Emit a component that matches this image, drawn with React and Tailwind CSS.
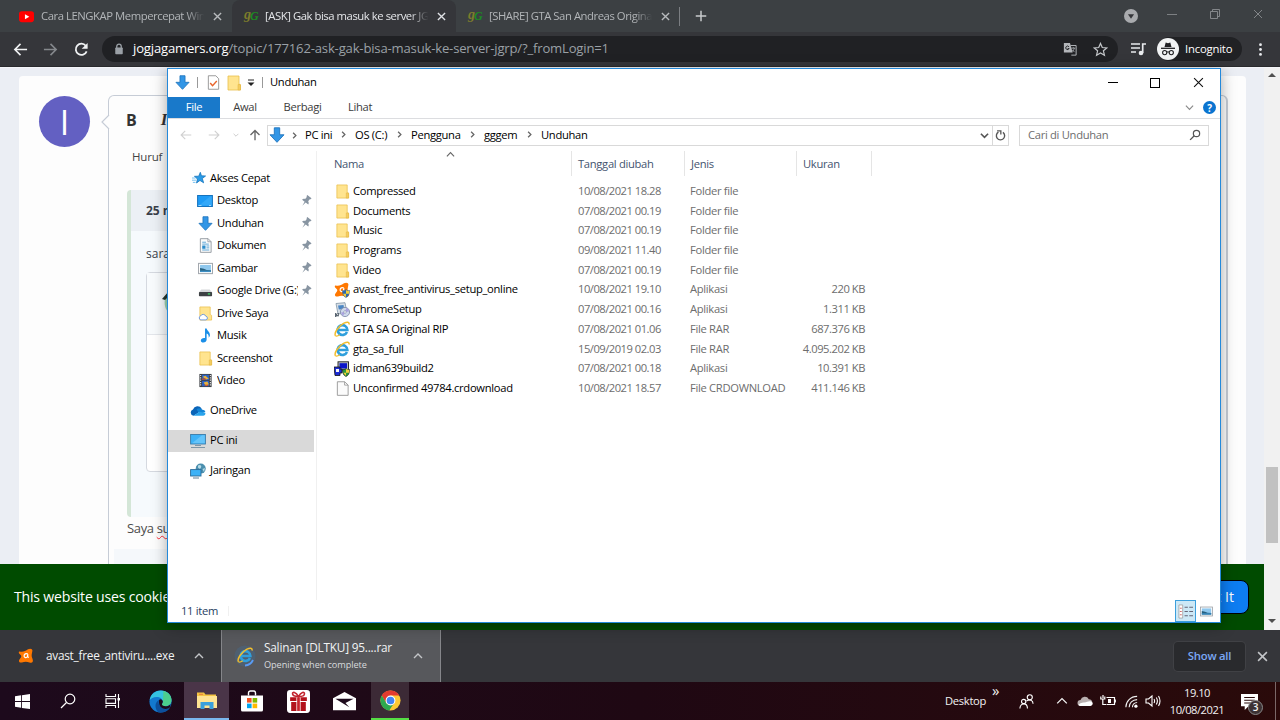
import React from 'react'

const Svg = ({ size = 16, box = 16, className = "", children }) => (
  <svg width={size} height={size} viewBox={`0 0 ${box} ${box}`} fill="none" className={`block shrink-0 ${className}`}>
    {children}
  </svg>
)

const Folder = ({ size = 15 }) => (
  <Svg size={size}>
    <path d="M2 1h11v8l1.500 1v5H2z" fill="#ffe48f" stroke="#e9bf4c" strokeWidth=".8" />
    <path d="M12 9.5h2.5V15H12z" fill="#f4cd60" stroke="#e0b13c" strokeWidth=".5" />
  </Svg>
)
const DownArrow = ({ size = 15 }) => (
  <Svg size={size}>
    <path d="M5.3.8h5.4v7H15L8 15.3 1 7.800h4.300z" fill="#3296e6" stroke="#1f74bd" strokeWidth=".9" />
  </Svg>
)
const QuickStar = () => (
  <Svg size={14}>
    <path d="M9.500 1.500l1.300 4 4.700.2-3.700 2.900 1.500 4.900-4.200-2.700-3.900 2.900 1-4.600L2.800 6.100l4.900-.2z" fill="#2b9be6" stroke="#1474bd" strokeWidth=".9" />
    <path d="M0 8h4M0 10.500h4.500M1 13h3" stroke="#63b8ee" strokeWidth="1" />
  </Svg>
)
const DesktopIcon = () => (
  <Svg size={16}>
    <rect x=".6" y="2.500" width="14.800" height="11" fill="#1e9bf5" stroke="#1673bd" />
    <path d="M2 12.500L13 3.500h1.800v9z" fill="#41b1fa" opacity=".6" />
    <path d="M1.500 12.500h3M12 12.500h2" stroke="#bfe3fb" strokeWidth=".8" />
  </Svg>
)
const DocIcon = () => (
  <Svg size={15}>
    <path d="M2.500.7h8.300L14 4v11.300H2.500z" fill="#fafafa" stroke="#8b9299" strokeWidth=".9" />
    <path d="M10.500.7V4H14" stroke="#8b9299" strokeWidth=".8" />
    <path d="M4.500 4.500h4M4.500 6.500h7M9 8.500h3M9 10.500h3M4.500 12.800h7.500" stroke="#5aa4d6" />
    <rect x="4.500" y="8" width="3.500" height="3.500" fill="#2b8bcb" />
  </Svg>
)
const PictureIcon = ({ size = 15 }) => (
  <Svg size={size}>
    <rect x=".6" y="2.500" width="14.800" height="11" fill="#fff" stroke="#9aa0a6" />
    <rect x="2.200" y="4.200" width="11.600" height="7.600" fill="#8fc8ee" />
    <path d="M2.200 7.500l4 .8 3 1.200 4.600.3v2H2.200z" fill="#27607f" />
    <path d="M2.200 10.200h11.600v1.600H2.200z" fill="#3d8fc4" />
  </Svg>
)
const DriveIcon = () => (
  <Svg size={15}>
    <path d="M3.500 6.800h9l2.500 3H1z" fill="#d5d8da" />
    <rect x="1" y="9.500" width="14" height="4.500" rx=".8" fill="#3d4144" />
    <rect x="10.500" y="11" width="2.500" height="1.300" fill="#3fe06a" />
  </Svg>
)
const CloudFolder = () => (
  <Svg size={15}>
    <path d="M2 1h11v8l1.500 1v5H2z" fill="#ffe48f" stroke="#e9bf4c" strokeWidth=".8" />
    <path d="M3 14.800a2.200 2.200 0 0 1-.2-4.200 3 3 0 0 1 5.500.3A2 2 0 0 1 8.600 14.800z" fill="#fff" stroke="#5a8de0" strokeWidth=".9" />
  </Svg>
)
const MusicIcon = () => (
  <Svg size={15}>
    <path d="M7.500.5h1.700c.3 2.500 3.900 3.700 3.500 7.500-.2 1.200-.8 1.900-1.400 2.400.6-2.600-.4-4-2.100-4.600v6.500c0 1.900-1.600 3.200-3.500 3.200-1.500 0-2.700-.8-2.700-2.200 0-1.800 2.100-3 4.500-2.600z" fill="#1a8fe8" />
  </Svg>
)
const FilmIcon = () => (
  <Svg size={15}>
    <rect x="1.500" y="1" width="13" height="14" fill="#3c3f43" />
    <path d="M2.800 2v12M13.200 2v12" stroke="#e6e6e6" strokeWidth="1.200" strokeDasharray="1.300 1.200" />
    <rect x="4.300" y="1.800" width="7.400" height="5.800" fill="#2c62c4" />
    <rect x="4.300" y="8.400" width="7.400" height="5.800" fill="#2c62c4" />
    <path d="M5 4l3-1 3.500 3-3 1zM6 10l4-1 1.500 3-3 2z" fill="#e8b33c" />
    <path d="M4.300 6.500h4M7 13h4" stroke="#c6482e" strokeWidth="1.200" />
  </Svg>
)
const OneDriveIcon = () => (
  <Svg size={16}>
    <path d="M3.500 12.800A3.300 3.300 0 0 1 3 6.400 4.800 4.800 0 0 1 11.600 5.500L8 10z" fill="#0a64b8" />
    <path d="M6.500 6.300a4.800 4.800 0 0 1 6 .5A3.200 3.200 0 0 1 15.500 9l-6 2z" fill="#1284d6" />
    <path d="M3.500 12.800L9.500 8.800l6 1.200a2.700 2.700 0 0 1-2.200 2.800z" fill="#29a4ec" />
  </Svg>
)
const PcIcon = () => (
  <Svg size={16}>
    <rect x=".6" y="1.500" width="14.800" height="9.500" fill="#3db2f7" stroke="#3b7ba8" strokeWidth=".9" />
    <path d="M2 10.300L12 2.200h2.800v8z" fill="#7fd0fb" opacity=".6" />
    <path d="M5 12.500h6M1 14.500h14" stroke="#7e97a8" strokeWidth="1" />
  </Svg>
)
const NetworkIcon = () => (
  <Svg size={16}>
    <circle cx="10.700" cy="5.600" r="5" fill="#4b8fae" />
    <path d="M8 2.500c2-1.500 4 0 3 2s-2 1-3 0M12.500 6l2.500-1-1 4z" fill="#b7dce8" />
    <rect x=".6" y="6.600" width="10.400" height="6.400" fill="#3db2f7" stroke="#2b6a97" strokeWidth=".9" />
    <path d="M3 15h6" stroke="#7e97a8" strokeWidth="1.200" />
  </Svg>
)
const Pin = () => (
  <Svg size={12} className="rotate-[38deg]">
    <path d="M4.500.5h7v1.800l-1 .7v3.600c1.700.6 2.700 1.700 2.700 3.200H8.900L8 16 7.100 9.800H2.800c0-1.500 1-2.600 2.700-3.200V3l-1-.7z" fill="#8895a2" />
  </Svg>
)
const Avast = ({ size = 16, shield = false }) => (
  <Svg size={size}>
    <path d="M1.800 3.600C5 4.400 7.500 3 10 1.300c2-1.300 4.700-.6 4.400 1.500C14 5.700 13 7.300 14.500 10.800c1.200 3-.4 4.800-3 3.700-3-1.200-5.300-.7-7.500-.1-3 .8-3.900-1.600-2-3.700 1.600-1.800 2-2.700-.4-4.600C.4 5 .6 3.300 1.800 3.600z" fill="#ff7800" />
    <path d="M9.800 6c-1.700-1.200-3.900.2-3.700 2.100.3 1.700 2.400 2 3.200.7l.6-2.600c-.4 2-.2 3.200.9 3.200" stroke="#fff" strokeWidth="1.200" />
    {shield && <path d="M8.500 8.500c2 .5 3-.6 3.500-1 .6.500 1.700 1.500 3.500 1 0 4-1 5.800-3.500 7-2.500-1.200-3.500-3-3.500-7z" fill="#2868b5" stroke="#55687c" strokeWidth=".6" />}
    {shield && <path d="M12 8v3.800h3C15.300 10.700 15.300 9.500 15.300 9 14 9.200 12.800 8.700 12 8zM9.200 11.800H12v3.300c-1.500-.8-2.400-1.800-2.800-3.300z" fill="#f2cf3b" />}
  </Svg>
)
const SetupIcon = () => (
  <Svg size={16}>
    <path d="M2 1.500l9-.8 2 10-9 1.300z" fill="#d8dfe6" stroke="#7f93a5" strokeWidth=".8" />
    <path d="M4 3.500l5.500-.5.800 4-5.500.6z" fill="#4b86c4" />
    <circle cx="11" cy="10" r="4.600" fill="#cfd9ec" stroke="#7987a4" strokeWidth=".8" />
    <path d="M11 10l1.500-4.200A4 4 0 0 1 15 9.500zM11 10l-2 4-2-3.500z" fill="#a9a0df" />
    <circle cx="11" cy="10" r="1.300" fill="#fff" stroke="#7987a4" strokeWidth=".6" />
    <path d="M1 11h4v4H1z" fill="#5b6773" />
    <path d="M2 10.500l2 2.500M2 15l4-1" stroke="#fff" strokeWidth=".8" />
  </Svg>
)
const IeIcon = ({ size = 16 }) => (
  <Svg size={size}>
    <path d="M13 11A4.900 4.900 0 1 1 13.400 9H4.800" stroke="#2f9fdc" strokeWidth="2.600" />
    <path d="M1.500 14.800C-.3 12 4.500 5 10 2.200c3-1.600 5.500-1.500 5 1.300" stroke="#f2bd2c" strokeWidth="1.500" />
    <path d="M1.500 14.800c1 .7 2.800 0 4.300-1" stroke="#f2bd2c" strokeWidth="1.300" />
  </Svg>
)
const IdmIcon = () => (
  <Svg size={16}>
    <rect x="4" y=".8" width="10.500" height="8.200" fill="#b9bec4" stroke="#202020" strokeWidth=".9" />
    <rect x="5.500" y="2.200" width="7.500" height="5.300" fill="#0b15c9" />
    <path d="M0 6h6v2h2v4H6v2.500H1z" fill="#1b2bd6" stroke="#111" strokeWidth=".8" />
    <path d="M2 8h3v3H2z" fill="#f4f4f4" />
    <path d="M8.500 8.500c2 .5 3-.6 3.500-1 .6.500 1.700 1.500 3.500 1 0 4-1 5.800-3.500 7-2.500-1.200-3.500-3-3.500-7z" fill="#2c9a3d" stroke="#222" strokeWidth=".7" />
    <path d="M12 8v3.800h3.200V9zM9.200 11.800H12v3.300z" fill="#f2cf3b" />
  </Svg>
)
const BlankFile = () => (
  <Svg size={15}>
    <path d="M2.500.8h7.800L14 4.300v11H2.500z" fill="#fbfbfb" stroke="#8f8f8f" strokeWidth=".9" />
    <path d="M10.200.8v3.600H14" stroke="#8f8f8f" strokeWidth=".8" />
  </Svg>
)
const Close = ({ size = 9, color = "#dfe1e5", w = 1.5 }) => (
  <Svg size={size} box={10}><path d="M1 1l8 8M9 1L1 9" stroke={color} strokeWidth={w} /></Svg>
)
const Chevron = ({ className = "", size = 8, color = "#666", w = 1.3 }) => (
  <Svg size={size} box={10} className={className}><path d="M1 3l4 4 4-4" stroke={color} strokeWidth={w} /></Svg>
)

const JgLogo = () => (
  <span className="flex w-[14px] shrink-0 items-center font-['Liberation_Serif'] text-[14px] leading-none font-bold italic">
    <span className="-mt-[3px] text-[#7d7c2c]">g</span><span className="-ml-px text-[12px] text-[#1e8a22]">G</span>
  </span>
)

const quickAccess = [
  { name: "Desktop", icon: <DesktopIcon />, pin: true },
  { name: "Unduhan", icon: <DownArrow />, pin: true },
  { name: "Dokumen", icon: <DocIcon />, pin: true },
  { name: "Gambar", icon: <PictureIcon />, pin: true },
  { name: "Google Drive (G:)", icon: <DriveIcon />, pin: true },
  { name: "Drive Saya", icon: <CloudFolder /> },
  { name: "Musik", icon: <MusicIcon /> },
  { name: "Screenshot", icon: <Folder /> },
  { name: "Video", icon: <FilmIcon /> },
]

const files = [
  { name: "Compressed", date: "10/08/2021 18.28", type: "Folder file", size: "", icon: <Folder /> },
  { name: "Documents", date: "07/08/2021 00.19", type: "Folder file", size: "", icon: <Folder /> },
  { name: "Music", date: "07/08/2021 00.19", type: "Folder file", size: "", icon: <Folder /> },
  { name: "Programs", date: "09/08/2021 11.40", type: "Folder file", size: "", icon: <Folder /> },
  { name: "Video", date: "07/08/2021 00.19", type: "Folder file", size: "", icon: <Folder /> },
  { name: "avast_free_antivirus_setup_online", date: "10/08/2021 19.10", type: "Aplikasi", size: "220 KB", icon: <Avast shield /> },
  { name: "ChromeSetup", date: "07/08/2021 00.16", type: "Aplikasi", size: "1.311 KB", icon: <SetupIcon /> },
  { name: "GTA SA Original RIP", date: "07/08/2021 01.06", type: "File RAR", size: "687.376 KB", icon: <IeIcon /> },
  { name: "gta_sa_full", date: "15/09/2019 02.03", type: "File RAR", size: "4.095.202 KB", icon: <IeIcon /> },
  { name: "idman639build2", date: "07/08/2021 00.18", type: "Aplikasi", size: "10.391 KB", icon: <IdmIcon /> },
  { name: "Unconfirmed 49784.crdownload", date: "10/08/2021 18.57", type: "File CRDOWNLOAD", size: "411.146 KB", icon: <BlankFile /> },
]

const crumbs = [
  { name: "PC ini", width: "w-[50px]" },
  { name: "OS (C:)", width: "w-[56px]" },
  { name: "Pengguna", width: "w-[73px]" },
  { name: "gggem", width: "w-[57px]" },
]

const TabTitle = ({ children }) => (
  <span className="ml-[7px] w-[165px] shrink-0 text-[11.3px] tracking-[-0.45px] whitespace-nowrap [mask-image:linear-gradient(to_right,black_88%,transparent_99%)]">
    {children}
  </span>
)

const TabStrip = () => (
  <div className="flex h-8 bg-[#3c4043] text-[#b2b5b8]">
    <div className="flex w-[232px] items-center pl-[19px]">
      <Svg size={15}>
        <rect x="0" y="2.500" width="16" height="11.500" rx="3" fill="#f00" />
        <path d="M6.300 5.500v5.500l4.700-2.750z" fill="#fff" />
      </Svg>
      <TabTitle>Cara LENGKAP Mempercepat Win</TabTitle>
      <span className="ml-[7px]"><Close color="#b7babd" /></span>
    </div>
    <div className="flex w-[224px] items-center rounded-t-lg bg-[#35363a] pl-[12px] text-[#e4e6e9]">
      <JgLogo />
      <TabTitle>[ASK] Gak bisa masuk ke server JG</TabTitle>
      <span className="ml-[7px]"><Close /></span>
    </div>
    <div className="flex w-[224px] items-center pl-[12px]">
      <JgLogo />
      <TabTitle>[SHARE] GTA San Andreas Origina</TabTitle>
      <span className="ml-[7px]"><Close color="#b7babd" /></span>
      <span className="ml-[9px] h-[19px] w-px bg-[#7b7e82]"></span>
    </div>
    <div className="flex flex-1 items-center pl-[15px]">
      <Svg size={12}><path d="M8 1v14M1 8h14" stroke="#c8cacd" strokeWidth="2" /></Svg>
    </div>
    <div className="flex items-center pr-[17px]">
      <Svg size={14} className="mr-[29px]">
        <circle cx="8" cy="8" r="8" fill="#a9abae" />
        <path d="M4.500 6h7L8 11z" fill="#35363a" />
      </Svg>
      <span className="mr-[33px] mb-1 h-px w-[10px] bg-[#7d8083]"></span>
      <Svg size={10} box={10} className="mr-[33px] mb-1">
        <path d="M.5 2.500h7v7h-7zM2.500 2.500v-2h7v7h-2" stroke="#8b8e91" strokeWidth=".9" />
      </Svg>
      <span className="mb-1"><Close size={10} color="#8b8e91" w={0.9} /></span>
    </div>
  </div>
)

const Toolbar = () => (
  <div className="flex h-[35px] items-center border-b border-[#292a2d] bg-[#35363a] pl-[13px] text-white">
    <Svg size={15}><path d="M15 8H2M8 2L2 8l6 6" stroke="#f1f3f4" strokeWidth="1.700" /></Svg>
    <Svg size={15} className="ml-[15px]"><path d="M1 8h13M8 2l6 6-6 6" stroke="#85888c" strokeWidth="1.700" /></Svg>
    <Svg size={15} className="ml-[16px]">
      <path d="M13.500 10A6 6 0 1 1 12.600 4" stroke="#f1f3f4" strokeWidth="1.900" />
      <path d="M14.500 1v6.300H8.200z" fill="#f1f3f4" />
    </Svg>
    <div className="ml-[13px] flex h-[26px] w-[1016px] items-center rounded-full bg-[#202124] pl-[11px]">
      <Svg size={12}>
        <rect x="3" y="6" width="10" height="9" rx="1" fill="#9aa0a6" />
        <path d="M5 7V4.500a3 3 0 0 1 6 0V7" stroke="#9aa0a6" strokeWidth="1.700" />
      </Svg>
      <span className="ml-[8px] flex-1 text-[13.1px] tracking-[-0.18px] whitespace-nowrap text-[#9aa0a6]">
        <span className="text-white">jogjagamers.org</span>/topic/177162-ask-gak-bisa-masuk-ke-server-jgrp/?_fromLogin=1
      </span>
      <Svg size={14} className="mr-[16px]">
        <path d="M1 1h7l3 11H1z" fill="#b3b6ba" />
        <path d="M8.500 4H15v11H9.500" stroke="#b3b6ba" strokeWidth="1.100" />
        <path d="M6.800 5.500A2 2 0 1 0 7 7.500H5.300" stroke="#202124" strokeWidth="1.100" />
        <path d="M9.500 7h4.500M11.800 6v1M13 7c-.5 2-1.500 3-3 4M11 9l2 2.500" stroke="#b3b6ba" strokeWidth=".9" />
      </Svg>
      <Svg size={15} className="mr-[10px]">
        <path d="M8 1.500l1.900 4.400 4.800.4-3.600 3.100 1.100 4.700L8 11.600l-4.200 2.500 1.100-4.700L1.300 6.300l4.800-.4z" stroke="#c4c7ca" strokeWidth="1.300" />
      </Svg>
    </div>
    <Svg size={16} className="ml-[12px]">
      <path d="M1 3h9M1 7h9M1 11h5" stroke="#e8eaed" strokeWidth="1.700" />
      <path d="M12.700 12V3H16" stroke="#e8eaed" strokeWidth="1.700" />
      <circle cx="11" cy="12" r="2.300" fill="#e8eaed" />
    </Svg>
    <div className="ml-[11px] flex h-6 w-[85px] items-center rounded-full bg-[#202124]">
      <Svg size={22} box={22}>
        <circle cx="11" cy="11" r="11" fill="#f1f3f4" />
        <path d="M7.500 9l1.200-4.500 2.300.7 2.300-.7L14.500 9z" fill="#202124" />
        <path d="M4 10.300h14" stroke="#202124" strokeWidth="1.300" />
        <circle cx="7.700" cy="14.600" r="2.100" stroke="#202124" strokeWidth="1.100" />
        <circle cx="14.300" cy="14.600" r="2.100" stroke="#202124" strokeWidth="1.100" />
        <path d="M9.800 14.200q1.200-.8 2.400 0" stroke="#202124" />
      </Svg>
      <span className="ml-[6px] text-[11.3px] tracking-[-0.2px] font-medium">Incognito</span>
    </div>
    <Svg size={15} className="ml-[11px]">
      <g fill="#e8eaed"><circle cx="8" cy="2.800" r="1.500" /><circle cx="8" cy="8" r="1.500" /><circle cx="8" cy="13.200" r="1.500" /></g>
    </Svg>
  </div>
)

const Page = () => (
  <div className="flex h-[563px] border-t border-[#f4f5f8] bg-[#ebeef4]">
    <div className="flex w-[1264px] flex-col">
      <div className="flex h-[496px] overflow-hidden pt-2 pl-[19px]">
        <div className="flex w-[1227px] rounded-t bg-[#fdfdfd] pl-5">
          <div className="mt-[20px] flex size-[51px] items-center justify-center rounded-full bg-[#6360c2] font-['Open_Sans'] text-[34px] leading-none text-white">
            I
          </div>
          <div className="relative mt-[19px] ml-[18px] w-[1120px] rounded-t-md border border-r-2 border-b-0 border-[#c6ccd6] bg-[#fdfdfd]">
            <Svg size={14} box={14} className="absolute top-[19px] -left-[8px]">
              <path d="M8 0L1 7l7 7z" fill="#fdfdfd" />
              <path d="M8 0L1 7l7 7" stroke="#c6ccd6" strokeWidth="1.200" />
            </Svg>
            <div className="flex h-[47px] items-center gap-[24px] pl-[17px] text-[16px] text-[#333]">
              <span className="font-bold">B</span>
              <span className="font-['Liberation_Serif'] text-[17px] font-bold italic">I</span>
            </div>
            <div className="flex h-7 items-center pl-[23px] text-[11.5px] tracking-[-0.2px] text-[#444]">Huruf</div>
            <div className="mt-[19px] mr-[18px] ml-[18px] h-[327px] rounded border-l-4 border-[#d4e6d7] bg-[#f6fafd] text-[#3a3f4a]">
              <div className="flex h-[41px] items-center bg-[#ecf0f5] pl-[15px] text-[12px] font-bold">25 m</div>
              <div className="flex h-[41px] items-center pt-1 pl-[15px] text-[12px]">sara</div>
              <div className="ml-[15px] h-[200px] rounded border border-[#d5d9e0] bg-white">
                <div className="h-[62px] border-b border-[#e3e6eb] bg-[#f8fbfd] pt-[17px] pl-[14px]">
                  <Svg size={24} box={24}>
                    <path d="M2 9L8 1v22C4 19 3 14 4 9z" fill="#9fd8b4" />
                    <path d="M1 9L8 1v5L4 10z" fill="#25352c" />
                  </Svg>
                </div>
              </div>
            </div>
            <div className="flex h-[24px] items-center pl-[18px] text-[13px] tracking-[-0.35px] text-[#4c4c4c]">
              Saya&nbsp;<span className="underline decoration-red-500 decoration-wavy decoration-1 underline-offset-2">sudah</span>
            </div>
            <div className="mt-2 ml-[5px] mr-[18px] h-10 bg-[#f5f8fb]"></div>
          </div>
        </div>
      </div>
      <div className="flex h-[66px] items-center justify-between bg-[#004b00] pr-[15px] pl-[14px] text-[14.1px] text-white">
        <span className="tracking-[-0.2px]">This website uses cookies</span>
        <span className="flex h-[34px] w-[80px] items-center justify-end rounded-lg border border-black bg-[#0d7df2] pr-[14px]">Got It</span>
      </div>
    </div>
    <div className="flex w-4 flex-col items-center bg-[#f1f1f1]">
      <Svg size={8} box={8} className="mt-[3px]"><path d="M0 6l4-4 4 4z" fill="#505050" /></Svg>
      <div className="mt-[388px] h-[76px] w-3 bg-[#c1c1c1]"></div>
      <Svg size={8} box={8} className="mt-auto mb-[5px]"><path d="M0 2l4 4 4-4z" fill="#505050" /></Svg>
    </div>
  </div>
)

const SideRow = ({ icon, children, className = "pl-[22px]" }) => (
  <div className={`flex h-[22.5px] items-center ${className}`}>
    {icon}
    <span className="ml-[4px]">{children}</span>
  </div>
)

const Explorer = () => (
  <div className="absolute top-[68px] left-[167px] flex h-[555px] w-[1054px] flex-col border border-[#2489da] bg-white text-[11.2px] tracking-[-0.3px] whitespace-nowrap text-black shadow-[0_3px_14px_rgba(0,0,0,0.35)]">
    <div className="flex h-7 shrink-0 items-center pb-px pl-[7px]">
      <DownArrow />
      <span className="ml-[7px] h-[11px] w-px bg-[#999]"></span>
      <Svg size={15} className="ml-[8px]">
        <path d="M2.500.8h8L13.500 4v11.200h-11z" fill="#fff" stroke="#8b8b8b" strokeWidth=".9" />
        <path d="M4.500 8.500l2.500 3 4.500-5" stroke="#e8642b" strokeWidth="1.500" />
      </Svg>
      <span className="ml-[5px]"><Folder size={16} /></span>
      <Svg size={8} box={8} className="mt-px ml-[5px]"><path d="M1 1h6" stroke="#222" /><path d="M.5 3.500h7L4 7z" fill="#222" /></Svg>
      <span className="ml-[7px] h-[11px] w-px bg-[#999]"></span>
      <span className="ml-[7px]">Unduhan</span>
      <span className="flex-1"></span>
      <span className="mr-[32px] h-px w-[10px] bg-black"></span>
      <span className="mr-[33px] size-[10px] border border-black"></span>
      <span className="mr-[16px]"><Close size={11} color="#111" w={1} /></span>
    </div>
    <div className="flex h-[22px] shrink-0 items-stretch border-b border-[#dcdde0] text-[#3b3b3b]">
      <span className="flex w-[52px] items-center justify-center bg-[#1979ca] text-white">File</span>
      <span className="flex w-[50px] items-center justify-center">Awal</span>
      <span className="flex w-[65px] items-center justify-center">Berbagi</span>
      <span className="flex w-[50px] items-center justify-center">Lihat</span>
      <span className="flex flex-1 items-center justify-end pr-[4px]">
        <Chevron size={9} color="#8a8a8a" />
        <span className="ml-[9px] flex size-[13px] items-center justify-center rounded-full bg-[#0a74d0] text-[10px] leading-none font-bold text-white">?</span>
      </span>
    </div>
    <div className="flex h-[32px] shrink-0 items-center pl-[12px]">
      <Svg size={12}><path d="M15 8H1.500M7 2.500L1.500 8 7 13.500" stroke="#d0d0d0" strokeWidth="1.500" /></Svg>
      <Svg size={12} className="ml-[16px]"><path d="M1 8h13.500M9 2.500L14.500 8 9 13.500" stroke="#d0d0d0" strokeWidth="1.500" /></Svg>
      <Chevron size={6} className="ml-[13px]" color="#c0c0c0" />
      <Svg size={12} className="ml-[10px]"><path d="M8 15V2M2 8l6-6 6 6" stroke="#666" strokeWidth="1.800" /></Svg>
      <div className="ml-[6px] flex h-[21px] w-[742px] items-center border border-[#d9d9d9] pl-px">
        <DownArrow size={16} />
        <Chevron size={7} className="ml-[6px] mr-[7px] -rotate-90" w={1.8} />
        {crumbs.map((c) => (
          <span key={c.name} className={`flex items-center justify-between pr-[8px] ${c.width}`}>
            {c.name}
            <Chevron size={7} className="-rotate-90" w={1.8} />
          </span>
        ))}
        <span className="flex-1">Unduhan</span>
        <Chevron size={9} color="#555" w={1.800} />
        <span className="ml-[3px] flex h-full w-[16px] items-center justify-center border-l border-[#d9d9d9]">
          <Svg size={11}>
            <path d="M11.500 3.500a6 6 0 1 1-6.500-.3" stroke="#555" strokeWidth="2" />
            <path d="M3 1.200h5.500v5.500" stroke="#555" strokeWidth="1.900" />
          </Svg>
        </span>
      </div>
      <div className="ml-[10px] flex h-[21px] w-[190px] items-center justify-between border border-[#d9d9d9] pr-[7px] pl-[8px] text-[#6d6d6d]">
        Cari di Unduhan
        <Svg size={12}><circle cx="10" cy="6" r="4.200" stroke="#555" strokeWidth="1.600" /><path d="M7 9l-5.500 5.500" stroke="#555" strokeWidth="1.800" /></Svg>
      </div>
    </div>
    <div className="flex h-[449px] shrink-0">
      <div className="w-[149px] border-r border-[#f0f0f0] pt-[16px]">
        <SideRow icon={<QuickStar />} className="pl-[24px]">Akses Cepat</SideRow>
        {quickAccess.map((q) => (
          <div key={q.name} className="flex h-[22.5px] items-center pl-[29px]">
            <span className="flex w-4 justify-center">{q.icon}</span>
            <span className="ml-[4px] w-[81px] overflow-hidden">{q.name}</span>
            {q.pin && <span className="ml-[2px]"><Pin /></span>}
          </div>
        ))}
        <SideRow icon={<OneDriveIcon />} className="mt-[7.5px] pl-[22px]">OneDrive</SideRow>
        <SideRow icon={<PcIcon />} className="mt-[7.5px] mr-[2px] bg-[#d9d9d9] pl-[22px]">PC ini</SideRow>
        <SideRow icon={<NetworkIcon />} className="mt-[7.5px] pl-[22px]">Jaringan</SideRow>
      </div>
      <div className="flex-1">
        <div className="relative flex h-[25px] items-center text-[#44546f]">
          <Chevron size={9} className="absolute -top-px left-[129px] rotate-180" />
          <span className="flex h-full w-[255px] items-center border-r border-[#e5e5e5] pt-px pl-[17px]">Nama</span>
          <span className="flex h-full w-[113px] items-center border-r border-[#e5e5e5] pt-px pl-[6px]">Tanggal diubah</span>
          <span className="flex h-full w-[112px] items-center border-r border-[#e5e5e5] pt-px pl-[6px]">Jenis</span>
          <span className="flex h-full w-[75px] items-center border-r border-[#e5e5e5] pt-px pl-[6px]">Ukuran</span>
        </div>
        <div className="pt-[5.6px]">
          {files.map((f) => (
            <div key={f.name} className="flex h-[19.7px] items-center pl-[17px] text-[#6d6d6d]">
              <span className="flex w-4 justify-center">{f.icon}</span>
              <span className="ml-[3px] w-[225px] text-black">{f.name}</span>
              <span className="w-[112px] tracking-[-0.5px]">{f.date}</span>
              <span className="w-[104px]">{f.type}</span>
              <span className="w-[71px] text-right tracking-[-0.45px]">{f.size}</span>
            </div>
          ))}
        </div>
      </div>
    </div>
    <div className="flex flex-1 items-center pr-[7px] pl-[13px] text-[#27405f]">
      <span>11 item</span>
      <span className="ml-[10px] h-[10px] w-px bg-[#f0f0f0]"></span>
      <span className="ml-auto flex h-full w-[21px] items-center justify-center border border-[#3c9fdc] bg-[#cce8f6]">
        <Svg size={15}>
          <path d="M1 1h4v14H1z" fill="#fff" stroke="#999" strokeWidth=".8" />
          <path d="M2 4.500h2M2 8h2M2 11.500h2" stroke="#c66" />
          <path d="M7 3.500h3.500M12 3.500h4M7 8h3.500M12 8h4M7 12.500h3.500M12 12.500h4" stroke="#667" strokeWidth="1.100" />
        </Svg>
      </span>
      <span className="ml-[4px]"><PictureIcon size={13} /></span>
    </div>
  </div>
)

const DownloadBar = () => (
  <div className="flex h-[52px] items-center bg-[#35363a] text-[11.8px] tracking-[-0.25px] text-[#f1f3f4]">
    <div className="flex w-[221px] items-center pl-[18px]">
      <Avast size={16} />
      <span className="ml-[12px] w-[148px]">avast_free_antiviru....exe</span>
      <Chevron size={10} className="rotate-180" color="#c3c5c8" w={1.4} />
    </div>
    <div className="flex h-full w-[220px] items-center border-x border-[#85868a] bg-[#57585c] pl-[12px]">
      <span className="relative">
        <Svg size={22} box={22}>
          <circle cx="11" cy="11" r="10.500" fill="#4f5f70" />
          <path d="M19 15a9.500 9.500 0 0 1-8 5.500" stroke="#5b9bf3" strokeWidth="1.800" />
        </Svg>
        <span className="absolute top-[2px] left-[3px]"><IeIcon size={16} /></span>
      </span>
      <span className="ml-[8px] flex w-[149px] flex-col">
        <span className="leading-[18px] tracking-[-0.2px]">Salinan [DLTKU] 95....rar</span>
        <span className="text-[9.2px] leading-[18px] tracking-[-0.1px] text-[#d8dadd]">Opening when complete</span>
      </span>
      <Chevron size={10} className="rotate-180" color="#c3c5c8" w={1.4} />
    </div>
    <span className="ml-auto flex h-[29px] w-[71px] items-center justify-center rounded bg-[#292a2d] text-[11.3px] font-semibold text-[#7ba7f4] ring-1 ring-[#404145]">Show all</span>
    <span className="mr-[12px] ml-[12px]"><Close size={11} color="#c3c5c8" w={1.4} /></span>
  </div>
)

const Taskbar = () => (
  <div className="flex h-[38px] items-center bg-linear-to-r from-[#1d0a1c] via-[#1f0813] to-[#2a0a0a] text-[11.2px] tracking-[-0.35px] text-[#f2f2f2]">
    <div className="flex w-11 justify-center">
      <Svg size={15}><path d="M0 2.300l6.500-.9v6H0zM7.400 1.300L16 0v7.400H7.400zM0 8.400h6.500v6.200L0 13.700zM7.400 8.400H16V16l-8.600-1.200z" fill="#fff" /></Svg>
    </div>
    <div className="flex w-[47px] justify-center">
      <Svg size={16}><circle cx="10" cy="6" r="4.800" stroke="#fff" strokeWidth="1.200" /><path d="M6.500 9.500L1 15" stroke="#fff" strokeWidth="1.200" /></Svg>
    </div>
    <div className="flex w-[44px] justify-center">
      <Svg size={16}>
        <path d="M1 1v2.500h9.500V1M1 15v-2.500h9.500V15M1 5.800h9.500v4.600H1zM13.500 1v14" stroke="#fff" strokeWidth="1.100" />
        <path d="M12.500 5h2.500v2.500h-2.500z" fill="#fff" />
      </Svg>
    </div>
    <div className="flex w-[49px] justify-center pl-px">
      <Svg size={23} box={24}>
        <circle cx="12" cy="12" r="11.500" fill="#1379cf" />
        <path d="M.8 10.500C1.500 4 7 .5 12.500.5 19 .5 23.500 5 23.500 10.500c0 4-3 6.500-6.500 6.500-2.500 0-4-1-3.500-2.200 1-2.300.8-6.800-4-7.500C5.500 6.700 2 8.500.8 10.500z" fill="#35c2e0" />
        <path d="M15 1c5 1.200 8.500 5 8.500 9.500 0 4-3 6.500-6.500 6.500-2.500 0-4-1-3.500-2.200 1-1.500 1.500-3.300 1.200-5z" fill="#54d272" opacity=".75" />
        <path d="M9.500 23.200C5.500 19 6 12.500 10.500 10.500c-1.500 5 2 9.500 6.500 9.500 2 0 3.500-.6 5-1.500-2.500 4-7.500 6-12.500 4.700z" fill="#0c4f9c" />
        <path d="M10.500 10.500c1.500-1.800 4-.5 4 1.800 0 1.300-1.200 2-1 2.900.3 1.200 2 1.800 3.500 1.800 2.500 0 4.300-1 5.500-2.500-.5 2-.5 4-1.500 4.300-4 2.400-11.500 1.200-10.500-8.300z" fill="#1d0a1c" />
      </Svg>
    </div>
    <div className="flex h-full w-[45px] items-center justify-center border-b-2 border-[#7ab8ee] bg-[#4a3548]">
      <Svg size={22} box={22}>
        <path d="M1 3.500h7l1.500 2H20V19H1z" fill="#f5c542" />
        <path d="M3 4.800h4v1.200H3z" fill="#e34f3a" opacity=".5" />
        <path d="M1 7h20v12H1z" fill="#ffe493" />
        <path d="M4.500 20v-7h13v7h-4v-3.500h-5V20z" fill="#3aa0dc" />
      </Svg>
    </div>
    <div className="flex w-[46px] justify-center">
      <Svg size={22} box={22}>
        <path d="M7.500 5.500V3a2 2 0 0 1 2-2h3a2 2 0 0 1 2 2v2.500" stroke="#fff" strokeWidth="1.400" />
        <path d="M0 5.500h22V20a1.500 1.500 0 0 1-1.500 1.500h-19A1.500 1.500 0 0 1 0 20z" fill="#fff" />
        <path d="M6 8h4.600v4.600H6z" fill="#f25022" /><path d="M11.600 8h4.600v4.600h-4.600z" fill="#7fba00" />
        <path d="M6 13.600h4.600v4.600H6z" fill="#00a4ef" /><path d="M11.600 13.600h4.600v4.600h-4.600z" fill="#ffb900" />
      </Svg>
    </div>
    <div className="flex w-[46px] justify-center">
      <Svg size={23} box={22}>
        <rect width="22" height="22" rx="3" fill="#fff" />
        <path d="M3 7h16v3.500H3zM4 11.500h14V20H4z" fill="#b3121c" />
        <path d="M9 7h4v13H9z" fill="#fff" /><path d="M9.700 7h2.600v13H9.700z" fill="#c8222c" />
        <path d="M11 6.300C8.500 1.500 5 1.500 5.300 3.800s3 2.500 5.700 2.500c2.700 0 5.500-.2 5.700-2.500s-3.200-2.300-5.700 2.500z" stroke="#c2242f" strokeWidth="1.500" />
      </Svg>
    </div>
    <div className="flex w-[46px] justify-center">
      <Svg size={23} box={24}>
        <path d="M0 8.500L12 2l12 6.500V21H0z" fill="#fff" />
        <path d="M2.500 9h19L13 13.500l4 4.500z" fill="#1d0a1c" />
      </Svg>
    </div>
    <div className="ml-[4px] flex h-full w-[38px] items-center justify-center border-b-2 border-[#55dd44] bg-[#3c2a36]">
      <Svg size={21} box={24}>
        <circle cx="12" cy="12" r="11.500" fill="#fcc934" />
        <path d="M2 6.300A11.500 11.500 0 0 1 22 6.300H12L7 15z" fill="#e33b2e" />
        <path d="M2 6.300l5.500 9L12 17.500l-1.500 6A11.500 11.500 0 0 1 2 6.300z" fill="#2da94f" />
        <path d="M10.500 23.400l6-9-4 3-5-2.300z" fill="#2da94f" />
        <circle cx="12" cy="12" r="5.600" fill="#fff" />
        <circle cx="12" cy="12" r="4.400" fill="#4285f4" />
      </Svg>
    </div>
    <span className="ml-[536px] w-[46px] tracking-[-0.3px]">Desktop</span>
    <span className="mb-[22px] ml-px text-[15px] leading-none">»</span>
    <div className="ml-auto flex h-full items-center">
      <Svg size={15}>
        <g stroke="#fff" strokeWidth="1.200"><circle cx="11.500" cy="3.500" r="2.700" /><circle cx="5" cy="8" r="2.300" /><path d="M1 15.500c0-2.700 1.500-5 4-5s4 2.300 4 5M8 7.500c3.500-2.300 7-.8 7 3" /></g>
      </Svg>
      <Chevron size={12} className="ml-[22px] rotate-180" color="#f2f2f2" w={1.1} />
      <Svg size={16} className="ml-[9px]"><path d="M3.500 13a3 3 0 0 1 0-6 4.500 4.500 0 0 1 8.300-.8A3.500 3.500 0 0 1 13 13z" fill="#b9b0b0" /><path d="M3 13c-3-1 .5-3.500 4-3.500S11 7.800 14 8.500c3 1.500 1.500 4.500-1 4.500z" fill="#fff" /></Svg>
      <Svg size={16} className="ml-[7px]"><path d="M6.500 4.500h8v7h-8M15.300 6.500v3M3 2v3M.8 3.500v2.500h4V3.500M2.800 6v5.500H6" stroke="#fff" strokeWidth="1.200" /><path d="M8 6h3v4H8z" fill="#fff" /></Svg>
      <Svg size={15} className="ml-[8px]"><path d="M2 14C2 8 7 2.500 14 2.500M5.500 14c0-4 3.500-8 8.500-8M9 14c0-2.500 2-5 5-5" stroke="#eee" strokeWidth="1.200" /><circle cx="12.700" cy="13" r="1.700" fill="#fff" /></Svg>
      <Svg size={16} className="ml-[6px]"><path d="M1 6h2.500L7 3v10L3.500 10H1zM9 6q1.200 2 0 4M11.300 4.500q2.200 3.500 0 7M13.500 3q3 5 0 10" stroke="#fff" strokeWidth="1.100" /></Svg>
      <div className="ml-[7px] flex w-[58px] flex-col items-center pb-px leading-[17px] tracking-[-0.5px]"><span>19.10</span><span>10/08/2021</span></div>
      <div className="relative ml-[15px]">
        <Svg size={17}><path d="M0 1h16v11.500H7L3.500 16v-3.500H0z" fill="#fff" /><path d="M3 4.200h10M3 6.800h10M3 9.400h6" stroke="#2a0a0a" strokeWidth="1.100" /></Svg>
        <span className="absolute top-[7px] left-[7px] flex size-[15px] items-center justify-center rounded-full border border-[#888] bg-[#3c3234] text-[10px] leading-none font-semibold">3</span>
      </div>
      <span className="ml-[17px] h-full w-px bg-[#7a6868]"></span>
      <span className="w-[4px]"></span>
    </div>
  </div>
)

const App = () => {
  return (
    <div className="relative h-[720px] w-[1280px] overflow-hidden bg-[#35363a] font-['Open_Sans','Noto_Sans',sans-serif]">
      <TabStrip />
      <Toolbar />
      <Page />
      <DownloadBar />
      <Taskbar />
      <Explorer />
    </div>
  )
}

export default App
